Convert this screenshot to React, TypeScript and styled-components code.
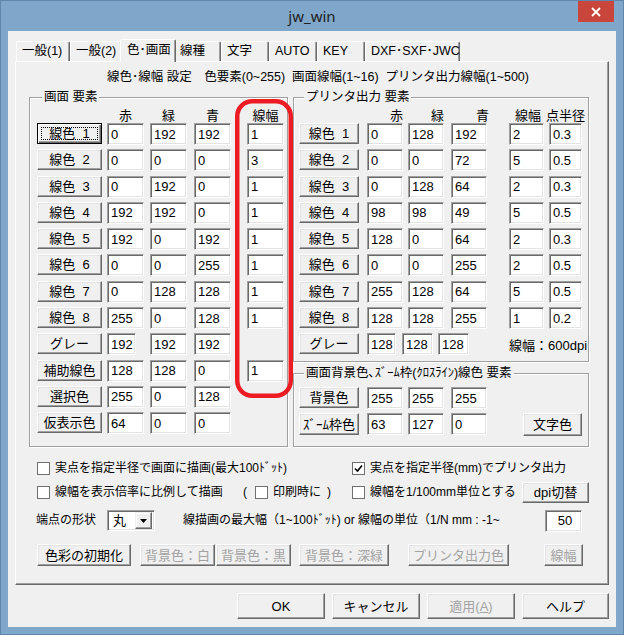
import styled, { createGlobalStyle, css } from "styled-components";

const GlobalStyle = createGlobalStyle`
  html, body {
    margin: 0;
    padding: 0;
    background: #7fa7ca;
  }
  body {
    font-family: "Liberation Sans", "Noto Sans CJK JP", sans-serif;
    font-size: 12px;
    line-height: 15px;
    color: #000;
  }
  * {
    box-sizing: border-box;
  }
`;

const Window = styled.div`
  width: 624px;
  height: 635px;
  border: 1px solid #5f87ad;
  background: #7fa7ca;
  display: flex;
  flex-direction: column;
`;

const TitleBar = styled.div`
  position: relative;
  flex: none;
  height: 30px;
  display: flex;
  align-items: center;
  justify-content: center;
  padding-top: 1px;
  font-family: "Noto Sans", sans-serif;
  font-size: 15px;
  color: #1e1e1e;
`;

const CloseButton = styled.div`
  position: absolute;
  top: 0;
  right: 9px;
  width: 36px;
  height: 21px;
  background: #c9463d;
  display: flex;
  align-items: center;
  justify-content: center;
`;

const Client = styled.div`
  flex: 1;
  margin: 0 7px 7px;
  background: #f0f0f0;
  padding: 8px 7px 8px;
  display: flex;
  flex-direction: column;
`;

const TabStrip = styled.div`
  display: flex;
  align-items: flex-end;
  height: 22px;
  padding-left: 1px;
`;

const Tab = styled.div<{ $w: number; $active?: boolean }>`
  width: ${(p) => p.$w}px;
  height: 20px;
  flex: none;
  border-style: solid;
  border-width: 1px 1px 0 1px;
  border-color: #fff #696969 transparent #fff;
  box-shadow: inset -1px 0 #a0a0a0;
  border-radius: 2px 2px 0 0;
  padding: 2px 0 0 5px;
  white-space: nowrap;
  font-size: 12.5px;
  ${(p) =>
    p.$active &&
    css`
      height: 23px;
      margin: 0 -2px -1px;
      position: relative;
      z-index: 1;
      background: #f0f0f0;
      padding: 3px 0 0 6px;
    `}
`;

const Panel = styled.div`
  position: relative;
  height: 524px;
  border: 1px solid;
  border-color: #fff #696969 #696969 #fff;
  box-shadow: inset -1px -1px #a0a0a0;
  padding: 8px 19px 0 13px;
  display: flex;
  flex-direction: column;
`;

const Header = styled.div`
  height: 14px;
  line-height: 14px;
  text-align: center;
  white-space: pre;
  padding-left: 18px;
  font-size: 12.5px;
`;

const GroupsRow = styled.div`
  display: flex;
  gap: 5px;
  margin-top: 6px;
  height: 357px;
`;

const Group = styled.fieldset<{ $w: number; $pad: string; $grow?: boolean }>`
  width: ${(p) => p.$w}px;
  margin: 0;
  min-width: 0;
  padding: ${(p) => p.$pad};
  border: 1px solid #a0a0a0;
  box-shadow: inset 1px 1px #fff, 1px 1px #fff;
  ${(p) => p.$grow && "flex: 1;"}
`;

const Legend = styled.legend`
  padding: 0 2px;
  margin-left: 5px;
  line-height: 14px;
  font-size: 12.5px;
  background: #f0f0f0;
  position: relative;
`;

const RightColumn = styled.div`
  width: 296px;
  display: flex;
  flex-direction: column;
  gap: 4px;
`;

const HeadGrid = styled.div<{ $cols: string }>`
  display: grid;
  grid-template-columns: ${(p) => p.$cols};
  height: 14px;
  align-items: center;
  font-size: 13px;
`;

const HeadCell = styled.div<{ $w: number; $align?: "center" | "right" }>`
  width: ${(p) => p.$w}px;
  text-align: ${(p) => p.$align ?? "center"};
  white-space: nowrap;
  line-height: 14px;
  ${(p) => p.$align !== "right" && "display: flex; justify-content: center;"}
`;

const ColorGrid = styled.div<{ $cols: string; $gap?: number }>`
  display: grid;
  grid-template-columns: ${(p) => p.$cols};
  grid-auto-rows: 22px;
  row-gap: ${(p) => p.$gap ?? 4.3}px;
  align-items: center;
`;

const WinButton = styled.button<{ $w: number; $h?: number; $focused?: boolean; $ml?: number }>`
  width: ${(p) => p.$w}px;
  height: ${(p) => p.$h ?? 21}px;
  margin: 0 0 0 ${(p) => p.$ml ?? 0}px;
  padding: 0;
  flex: none;
  font: inherit;
  font-size: 13px;
  color: #000;
  background: #f0f0f0;
  border: 1px solid;
  border-color: #fff #696969 #696969 #fff;
  box-shadow: inset -1px -1px #a0a0a0, inset 1px 1px #e3e3e3;
  white-space: pre;
  position: relative;
  align-self: start;
  &:disabled {
    color: #a3a3a3;
  }
  ${(p) =>
    p.$focused &&
    css`
      border-color: #000;
      box-shadow: inset 1px 1px #fff, inset -1px -1px #696969, inset -2px -2px #a0a0a0;
      &::after {
        content: "";
        position: absolute;
        inset: 3px;
        border: 1px dotted #000;
      }
    `}
`;

const Field = styled.input<{ $w: number }>`
  width: ${(p) => p.$w}px;
  height: 22px;
  margin: 0;
  padding: 0 0 0 3px;
  font-family: "Liberation Sans", "Noto Sans CJK JP", sans-serif;
  font-size: 13px;
  color: #000;
  background: #fff;
  border: 1px solid;
  border-color: #a0a0a0 #fff #fff #a0a0a0;
  box-shadow: inset 1px 1px #696969, inset -1px -1px #e3e3e3;
  outline: none;
`;

const GrayInputs = styled.div`
  grid-column: 2 / span 3;
  display: flex;
  align-items: center;
`;

const Note = styled.div`
  grid-column: 5 / span 2;
  text-align: right;
  font-size: 13px;
  white-space: nowrap;
  padding-top: 2px;
`;

const EndCell = styled.div`
  grid-column: 5 / span 2;
  display: flex;
  justify-content: flex-end;
  align-self: start;
`;

const Annotation = styled.svg`
  position: absolute;
  left: 219px;
  top: 37px;
  width: 58px;
  height: 299px;
  pointer-events: none;
`;

const Options = styled.div`
  display: flex;
  flex-direction: column;
  margin-top: 11px;
  padding-left: 8px;
`;

const OptionRow = styled.div<{ $h: number; $mt?: number; $grid?: boolean }>`
  height: ${(p) => p.$h}px;
  margin-top: ${(p) => p.$mt ?? 0}px;
  display: ${(p) => (p.$grid ? "grid" : "flex")};
  grid-template-columns: 315px 1fr;
  align-items: center;
  font-size: 12px;
`;

const Cell = styled.div`
  display: flex;
  align-items: center;
  height: 100%;
`;

const CheckItem = styled.label<{ $ml?: number }>`
  display: flex;
  align-items: center;
  gap: 5px;
  margin-left: ${(p) => p.$ml ?? 0}px;
  white-space: nowrap;
`;

const Box = styled.span`
  width: 13px;
  height: 13px;
  flex: none;
  background: #fff;
  border: 1px solid #707070;
  display: flex;
  align-items: center;
  justify-content: center;
`;

const Text = styled.span<{ $w?: number; $ml?: number }>`
  ${(p) => p.$w !== undefined && `width: ${p.$w}px;`}
  margin-left: ${(p) => p.$ml ?? 0}px;
  flex: none;
  white-space: pre;
`;

const Combo = styled.div`
  width: 48px;
  height: 21px;
  flex: none;
  display: flex;
  align-items: center;
  justify-content: space-between;
  background: #fff;
  border: 1px solid;
  border-color: #a0a0a0 #fff #fff #a0a0a0;
  box-shadow: inset 1px 1px #696969, inset -1px -1px #e3e3e3;
  padding: 2px 2px 2px 5px;
  font-size: 13px;
`;

const ComboButton = styled.div`
  width: 17px;
  height: 17px;
  background: #f0f0f0;
  border: 1px solid;
  border-color: #f0f0f0 #696969 #696969 #f0f0f0;
  box-shadow: inset -1px -1px #a0a0a0, inset 1px 1px #fff;
  display: flex;
  align-items: center;
  justify-content: center;
`;

const Footer = styled.div`
  display: flex;
  justify-content: flex-end;
  gap: 7px;
  margin-top: 8px;
`;

type LeftRow = { label: string; rgb: string[]; width?: string; narrow?: boolean; focused?: boolean };

const leftRows: LeftRow[] = [
  { label: "線色  1", rgb: ["0", "192", "192"], width: "1", focused: true },
  { label: "線色  2", rgb: ["0", "0", "0"], width: "3" },
  { label: "線色  3", rgb: ["0", "192", "0"], width: "1" },
  { label: "線色  4", rgb: ["192", "192", "0"], width: "1" },
  { label: "線色  5", rgb: ["192", "0", "192"], width: "1" },
  { label: "線色  6", rgb: ["0", "0", "255"], width: "1" },
  { label: "線色  7", rgb: ["0", "128", "128"], width: "1" },
  { label: "線色  8", rgb: ["255", "0", "128"], width: "1" },
  { label: "グレー", rgb: ["192", "192", "192"], narrow: true },
  { label: "補助線色", rgb: ["128", "128", "0"], width: "1" },
  { label: "選択色", rgb: ["255", "0", "128"] },
  { label: "仮表示色", rgb: ["64", "0", "0"] },
];

const printRows = [
  { label: "線色  1", v: ["0", "128", "192", "2", "0.3"] },
  { label: "線色  2", v: ["0", "0", "72", "5", "0.5"] },
  { label: "線色  3", v: ["0", "128", "64", "2", "0.3"] },
  { label: "線色  4", v: ["98", "98", "49", "5", "0.5"] },
  { label: "線色  5", v: ["128", "0", "64", "2", "0.3"] },
  { label: "線色  6", v: ["0", "0", "255", "2", "0.5"] },
  { label: "線色  7", v: ["255", "128", "64", "5", "0.5"] },
  { label: "線色  8", v: ["128", "128", "255", "1", "0.2"] },
];

const LEFT_COLS = "70px 43px 44px 53px 37px";
const RIGHT_COLS = "68px 41px 43px 58px 40px 33px";
const RIGHT_W = [36, 36, 36, 35, 33];

const tabs = [
  { label: "一般(1)", w: 54 },
  { label: "一般(2)", w: 52 },
  { label: "色･画面", w: 56, active: true },
  { label: "線種", w: 47 },
  { label: "文字", w: 48 },
  { label: "AUTO", w: 48 },
  { label: "KEY", w: 48 },
  { label: "DXF･SXF･JWC", w: 95 },
];

function Check({ checked }: { checked?: boolean }) {
  return (
    <Box>
      {checked && (
        <svg width="9" height="9" viewBox="0 0 9 9">
          <path d="M1 4.5 L3.5 7 L8 1.5" fill="none" stroke="#000" strokeWidth="1.6" />
        </svg>
      )}
    </Box>
  );
}

export default function App() {
  return (
    <>
      <GlobalStyle />
      <Window>
        <TitleBar>
          jw_win
          <CloseButton>
            <svg width="10" height="10" viewBox="0 0 10 10">
              <path d="M1 1 L9 9 M9 1 L1 9" stroke="#fff" strokeWidth="1.8" />
            </svg>
          </CloseButton>
        </TitleBar>
        <Client>
          <TabStrip>
            {tabs.map((t) => (
              <Tab key={t.label} $w={t.w} $active={t.active}>
                {t.label}
              </Tab>
            ))}
          </TabStrip>
          <Panel>
            <Header>{"線色･線幅 設定　色要素(0~255)  画面線幅(1~16)  プリンタ出力線幅(1~500)"}</Header>
            <GroupsRow>
              <Group $w={259} $pad="5px 0 10px 7px">
                <Legend>画面 要素</Legend>
                <HeadGrid $cols={LEFT_COLS}>
                  <span />
                  <HeadCell $w={37}>赤</HeadCell>
                  <HeadCell $w={37}>緑</HeadCell>
                  <HeadCell $w={37}>青</HeadCell>
                  <HeadCell $w={37}>線幅</HeadCell>
                </HeadGrid>
                <ColorGrid $cols={LEFT_COLS}>
                  {leftRows.map((r) => [
                    <WinButton key={r.label + "b"} $w={65} $focused={r.focused}>
                      {r.label}
                    </WinButton>,
                    ...r.rgb.map((v, i) => (
                      <Field key={r.label + i} $w={r.narrow && i === 0 ? 29 : 37} defaultValue={v} readOnly />
                    )),
                    r.width ? (
                      <Field key={r.label + "w"} $w={37} defaultValue={r.width} readOnly />
                    ) : (
                      <span key={r.label + "w"} />
                    ),
                  ])}
                </ColorGrid>
              </Group>
              <RightColumn>
                <Group $w={296} $pad="5px 0 6px 5px">
                  <Legend>プリンタ出力 要素</Legend>
                  <HeadGrid $cols={RIGHT_COLS}>
                    <span />
                    <HeadCell $w={36} $align="right">赤</HeadCell>
                    <HeadCell $w={36} $align="right">緑</HeadCell>
                    <HeadCell $w={38} $align="right">青</HeadCell>
                    <HeadCell $w={38}>線幅</HeadCell>
                    <HeadCell $w={33}>点半径</HeadCell>
                  </HeadGrid>
                  <ColorGrid $cols={RIGHT_COLS}>
                    {printRows.map((r) => [
                      <WinButton key={r.label + "b"} $w={60}>
                        {r.label}
                      </WinButton>,
                      ...r.v.map((v, i) => <Field key={r.label + i} $w={RIGHT_W[i]} defaultValue={v} readOnly />),
                    ])}
                    <WinButton $w={60}>グレー</WinButton>
                    <GrayInputs>
                      <Field $w={29} defaultValue="128" readOnly />
                      <Field $w={31} defaultValue="128" readOnly style={{ marginLeft: 6 }} />
                      <Field $w={31} defaultValue="128" readOnly style={{ marginLeft: 5 }} />
                    </GrayInputs>
                    <Note>線幅：600dpi</Note>
                  </ColorGrid>
                </Group>
                <Group $w={296} $pad="7px 0 9px 5px" $grow>
                  <Legend>画面背景色､ｽﾞｰﾑ枠(ｸﾛｽﾗｲﾝ)線色 要素</Legend>
                  <ColorGrid $cols={RIGHT_COLS} $gap={4}>
                    <WinButton $w={60}>背景色</WinButton>
                    <Field $w={36} defaultValue="255" readOnly />
                    <Field $w={36} defaultValue="255" readOnly />
                    <Field $w={36} defaultValue="255" readOnly />
                    <span />
                    <span />
                    <WinButton $w={60} $h={22}>
                      ｽﾞｰﾑ枠色
                    </WinButton>
                    <Field $w={36} defaultValue="63" readOnly />
                    <Field $w={36} defaultValue="127" readOnly />
                    <Field $w={36} defaultValue="0" readOnly />
                    <EndCell>
                      <WinButton $w={59} $h={23}>
                        文字色
                      </WinButton>
                    </EndCell>
                  </ColorGrid>
                </Group>
              </RightColumn>
            </GroupsRow>

            <Options>
              <OptionRow $h={20} $grid>
                <CheckItem>
                  <Check />
                  <Text>実点を指定半径で画面に描画(最大100ﾄﾞｯﾄ)</Text>
                </CheckItem>
                <CheckItem>
                  <Check checked />
                  <Text>実点を指定半径(mm)でプリンタ出力</Text>
                </CheckItem>
              </OptionRow>
              <OptionRow $h={21} $mt={4} $grid>
                <Cell>
                  <CheckItem>
                    <Check />
                    <Text $w={188}>線幅を表示倍率に比例して描画</Text>
                  </CheckItem>
                  <Text>(</Text>
                  <CheckItem $ml={8}>
                    <Check />
                    <Text>印刷時に</Text>
                  </CheckItem>
                  <Text $ml={6}>)</Text>
                </Cell>
                <Cell>
                  <CheckItem>
                    <Check />
                    <Text>線幅を1/100mm単位とする</Text>
                  </CheckItem>
                  <WinButton $w={67} style={{ marginLeft: "auto", alignSelf: "center" }}>
                    dpi切替
                  </WinButton>
                </Cell>
              </OptionRow>
              <OptionRow $h={21} $mt={7}>
                <Text $w={71} $ml={-1}>
                  端点の形状
                </Text>
                <Combo>
                  <span>丸</span>
                  <ComboButton>
                    <svg width="7" height="4" viewBox="0 0 7 4">
                      <path d="M0 0 H7 L3.5 4 Z" fill="#000" />
                    </svg>
                  </ComboButton>
                </Combo>
                <Text $ml={28}>線描画の最大幅（1~100ﾄﾞｯﾄ) or 線幅の単位（1/N mm : -1~</Text>
                <Field $w={37} defaultValue="50" readOnly style={{ marginLeft: "auto", marginRight: 7, textAlign: "center" }} />
              </OptionRow>
              <OptionRow $h={22} $mt={13}>
                <WinButton $w={94} $h={22}>
                  色彩の初期化
                </WinButton>
                <WinButton $w={75} $h={22} $ml={9} disabled>
                  背景色：白
                </WinButton>
                <WinButton $w={75} $h={22} $ml={1} disabled>
                  背景色：黒
                </WinButton>
                <WinButton $w={90} $h={22} $ml={8} disabled>
                  背景色：深緑
                </WinButton>
                <WinButton $w={101} $h={22} $ml={19} disabled>
                  プリンタ出力色
                </WinButton>
                <WinButton $w={39} $h={22} $ml={35} disabled>
                  線幅
                </WinButton>
              </OptionRow>
            </Options>

            <Annotation viewBox="0 0 58 299">
              <rect x="2.25" y="2.25" width="53.5" height="294.5" rx="15" ry="15" fill="none" stroke="#ed1c24" strokeWidth="4.5" />
            </Annotation>
          </Panel>
          <Footer>
            <WinButton $w={88} $h={26}>
              OK
            </WinButton>
            <WinButton $w={88} $h={26}>
              キャンセル
            </WinButton>
            <WinButton $w={88} $h={26} disabled>
              適用(<u>A</u>)
            </WinButton>
            <WinButton $w={87} $h={26}>
              ヘルプ
            </WinButton>
          </Footer>
        </Client>
      </Window>
    </>
  );
}
